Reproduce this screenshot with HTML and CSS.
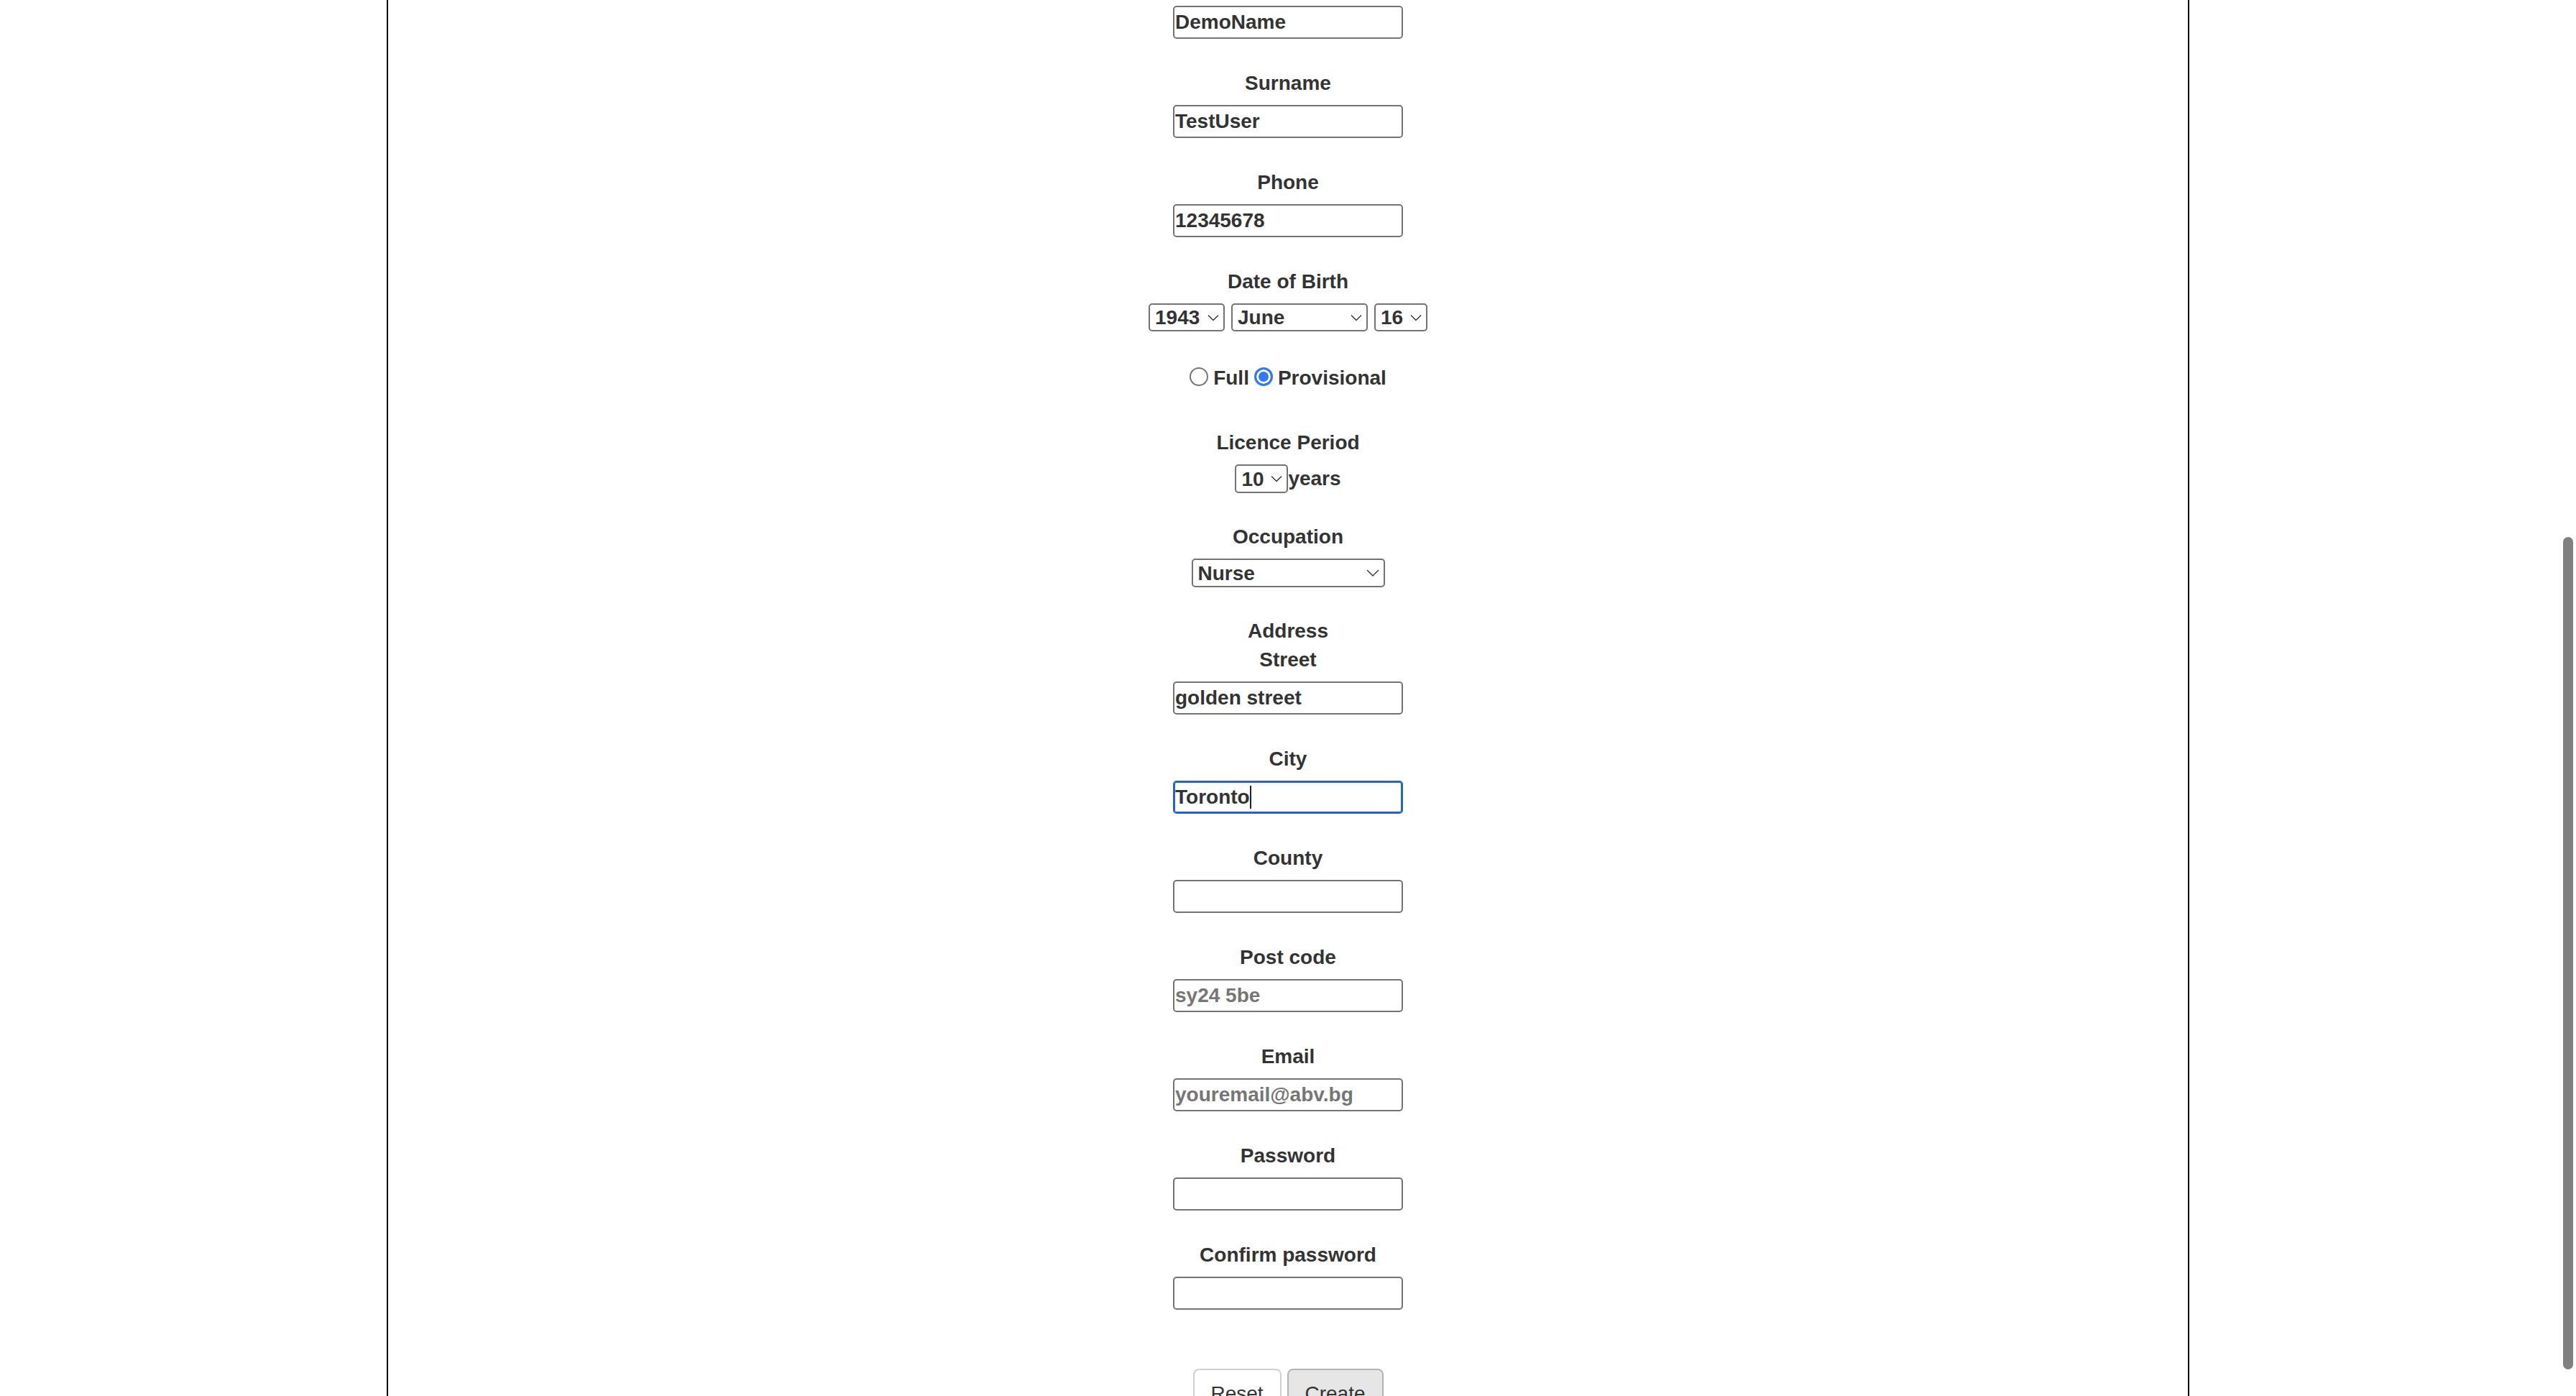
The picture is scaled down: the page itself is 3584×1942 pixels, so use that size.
FILE: index.html
```html
<!DOCTYPE html>
<html lang="en">
<head>
<meta charset="utf-8">
<title>Driver licence form</title>
<link rel="stylesheet" href="styles.css">
</head>
<body>
<main class="page">
  <form class="form">
    <div class="field">
      <input class="text" type="text" value="DemoName">
    </div>
    <div class="field">
      <label class="lbl">Surname</label>
      <input class="text" type="text" value="TestUser">
    </div>
    <div class="field">
      <label class="lbl">Phone</label>
      <input class="text" type="text" value="12345678">
    </div>
    <div class="field dob">
      <label class="lbl">Date of Birth</label>
      <div class="sel-row">
        <span class="sel"><select class="select w-year"><option>1943</option></select><svg class="chev" width="16" height="9" viewBox="0 0 16 9"><path d="M1 1 L8 8 L15 1" fill="none" stroke="#333" stroke-width="1.4"/></svg></span>
        <span class="sel"><select class="select w-month"><option>June</option></select><svg class="chev" width="16" height="9" viewBox="0 0 16 9"><path d="M1 1 L8 8 L15 1" fill="none" stroke="#333" stroke-width="1.4"/></svg></span>
        <span class="sel"><select class="select w-day"><option>16</option></select><svg class="chev" width="16" height="9" viewBox="0 0 16 9"><path d="M1 1 L8 8 L15 1" fill="none" stroke="#333" stroke-width="1.4"/></svg></span>
      </div>
    </div>
    <div class="radios">
      <label class="opt"><input class="radio" type="radio" name="ltype"><span>Full</span></label>
      <label class="opt"><input class="radio" type="radio" name="ltype" checked><span>Provisional</span></label>
    </div>
    <div class="field sfield">
      <label class="lbl">Licence Period</label>
      <div class="period">
        <span class="sel"><select class="select w-period"><option>10</option></select><svg class="chev" width="16" height="9" viewBox="0 0 16 9"><path d="M1 1 L8 8 L15 1" fill="none" stroke="#333" stroke-width="1.4"/></svg></span><span class="unit">years</span>
      </div>
    </div>
    <div class="field sfield">
      <label class="lbl">Occupation</label>
      <span class="sel"><select class="select tall w-occ"><option>Nurse</option></select><svg class="chev" width="18" height="10" viewBox="0 0 18 10"><path d="M1 1 L9 9 L17 1" fill="none" stroke="#333" stroke-width="1.4"/></svg></span>
    </div>
    <div class="field">
      <div class="lbl group">Address</div>
      <label class="lbl">Street</label>
      <input class="text" type="text" value="golden street">
    </div>
    <div class="field">
      <label class="lbl">City</label>
      <span class="focus-wrap"><input class="text focused" type="text" value="Toronto"><span class="caret"></span></span>
    </div>
    <div class="field">
      <label class="lbl">County</label>
      <input class="text" type="text">
    </div>
    <div class="field">
      <label class="lbl">Post code</label>
      <input class="text" type="text" placeholder="sy24 5be">
    </div>
    <div class="field">
      <label class="lbl">Email</label>
      <input class="text" type="text" placeholder="youremail@abv.bg">
    </div>
    <div class="field">
      <label class="lbl">Password</label>
      <input class="text" type="password">
    </div>
    <div class="field last">
      <label class="lbl">Confirm password</label>
      <input class="text" type="password">
    </div>
    <div class="buttons">
      <button type="button" class="btn reset">Reset</button>
      <button type="button" class="btn create">Create</button>
    </div>
  </form>
</main>
<div class="scroll-thumb"></div>
</body>
</html>
```
FILE: styles.css
```css
html, body {
  margin: 0;
  padding: 0;
  height: 1942px;
  overflow: hidden;
  background: #ffffff;
}

body {
  font-family: "Liberation Sans", Arial, Helvetica, sans-serif;
  font-size: 28px;
  color: #333333;
}

.page {
  box-sizing: border-box;
  width: 2508px;
  height: 1942px;
  margin: 0 auto;
  border-left: 2px solid #000000;
  border-right: 2px solid #000000;
  padding-top: 8px;
}

.form {
  display: flex;
  flex-direction: column;
  align-items: center;
}

.field {
  display: flex;
  flex-direction: column;
  align-items: center;
  margin-bottom: 46px;
}

.field.dob {
  margin-bottom: 49px;
}

.field.sfield {
  margin-bottom: 45px;
}

.field.last {
  margin-bottom: 82px;
}

.lbl {
  display: block;
  font-weight: bold;
  line-height: 32px;
  margin-bottom: 14px;
  color: #333333;
}

.lbl.group {
  margin-bottom: 8px;
}

.text {
  box-sizing: border-box;
  width: 320px;
  height: 46px;
  margin: 0;
  padding: 0 1px;
  border: 2px solid #737373;
  border-radius: 5px;
  background: #ffffff;
  font-family: "Liberation Sans", Arial, Helvetica, sans-serif;
  font-size: 28px;
  font-weight: bold;
  color: #333333;
  outline: none;
}

.text::placeholder {
  color: #767676;
  font-weight: bold;
}

.text.focused {
  border-color: #2563c7;
  box-shadow: inset 0 0 0 1px #2563c7;
}

.focus-wrap {
  position: relative;
  display: block;
}

.caret {
  position: absolute;
  left: 107px;
  top: 7px;
  width: 2px;
  height: 32px;
  background: #222222;
}

.sel-row {
  display: flex;
  gap: 9px;
}

.sel {
  position: relative;
  display: inline-block;
}

.select {
  -webkit-appearance: none;
  appearance: none;
  box-sizing: border-box;
  display: block;
  height: 39px;
  margin: 0;
  padding: 0 0 0 7px;
  border: 2px solid #737373;
  border-radius: 5px;
  background: #ffffff;
  font-family: "Liberation Sans", Arial, Helvetica, sans-serif;
  font-size: 28px;
  font-weight: bold;
  color: #333333;
  outline: none;
}

.select.tall {
  height: 40px;
}

.w-year { width: 106px; }
.w-month { width: 190px; }
.w-day { width: 74px; }
.w-period { width: 74px; height: 40px; }
.w-occ { width: 269px; }

.chev {
  position: absolute;
  right: 8px;
  top: 50%;
  transform: translateY(-50%);
  pointer-events: none;
}

.radios {
  display: flex;
  justify-content: center;
  gap: 7px;
  height: 32px;
  margin-bottom: 58px;
}

.opt {
  display: flex;
  align-items: flex-start;
  gap: 7px;
  font-weight: bold;
  line-height: 32px;
}

.radio {
  -webkit-appearance: none;
  appearance: none;
  box-sizing: border-box;
  width: 26px;
  height: 26px;
  margin: 1px 0 0 0;
  border: 2px solid #767676;
  border-radius: 50%;
  background: #ffffff;
  outline: none;
}

.radio:checked {
  border: 3px solid #3478f6;
  background: #3478f6;
  box-shadow: inset 0 0 0 3px #ffffff;
}

.period {
  display: flex;
  align-items: center;
}

.unit {
  font-weight: bold;
  line-height: 32px;
}

.buttons {
  display: flex;
  gap: 8px;
}

.btn {
  box-sizing: border-box;
  height: 69px;
  margin: 0;
  border-radius: 8px;
  font-family: "Liberation Sans", Arial, Helvetica, sans-serif;
  font-size: 28px;
  font-weight: normal;
  color: #333333;
}

.btn.reset {
  width: 123px;
  border: 2px solid #d0d0d0;
  background: #ffffff;
}

.btn.create {
  width: 134px;
  border: 2px solid #b4b4b4;
  background: #e6e6e6;
}

.scroll-thumb {
  position: fixed;
  left: 3566px;
  top: 747px;
  width: 14px;
  height: 1158px;
  border-radius: 7px;
  background: #808080;
}
```
